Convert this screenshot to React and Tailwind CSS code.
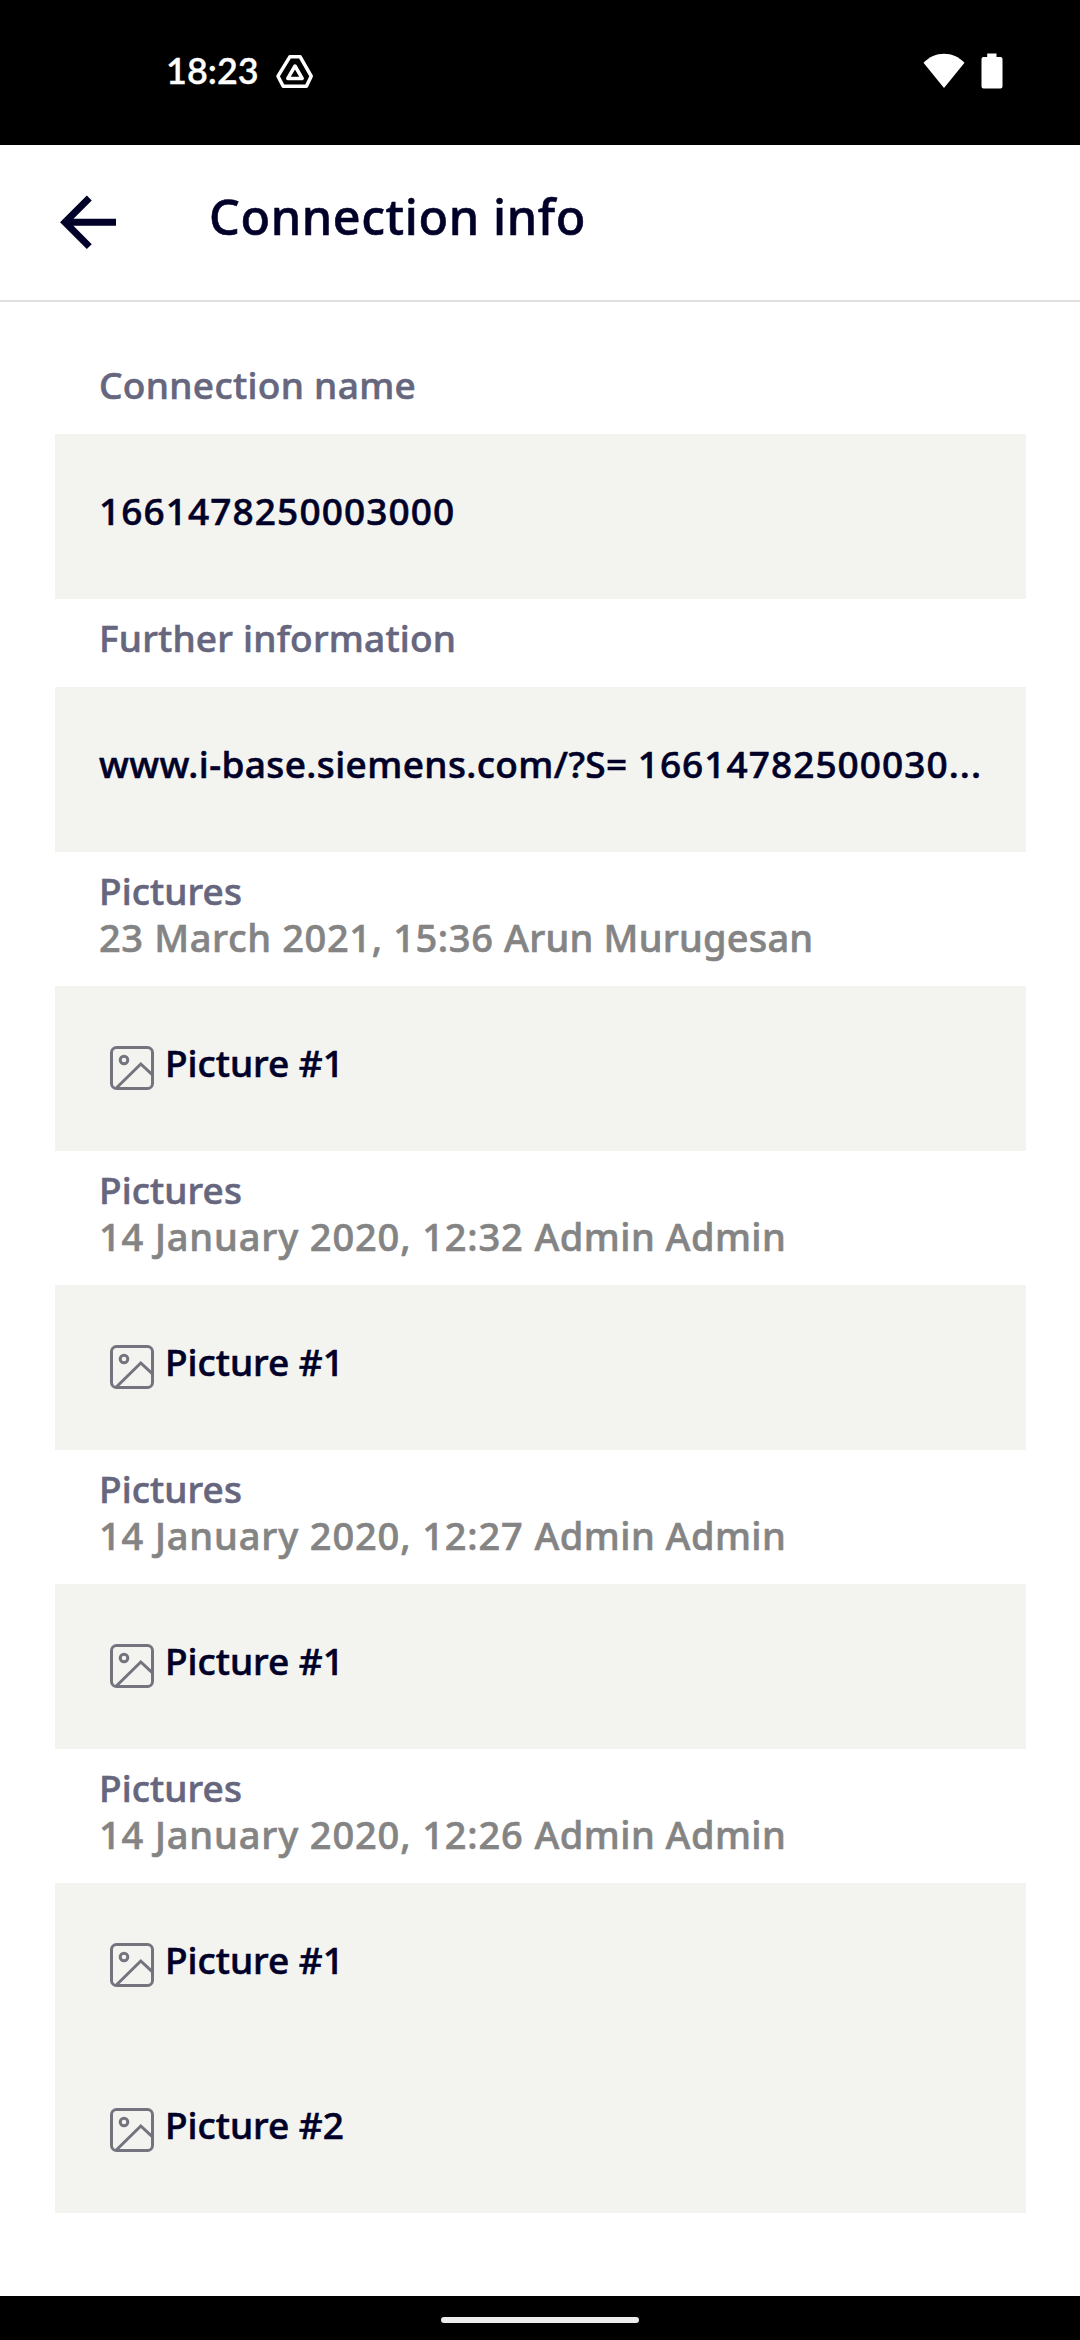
import React from "react";

const SECTIONS = [
  { date: "23 March 2021, 15:36", author: "Arun Murugesan", dateSpacing: "tracking-[0.62px]", authorSpacing: "tracking-[0.2px]", pictures: ["Picture #1"] },
  { date: "14 January 2020, 12:32", author: "Admin Admin", dateSpacing: "tracking-[0.85px]", authorSpacing: "tracking-[0.45px]", pictures: ["Picture #1"] },
  { date: "14 January 2020, 12:27", author: "Admin Admin", dateSpacing: "tracking-[0.85px]", authorSpacing: "tracking-[0.45px]", pictures: ["Picture #1"] },
  { date: "14 January 2020, 12:26", author: "Admin Admin", dateSpacing: "tracking-[0.85px]", authorSpacing: "tracking-[0.45px]", pictures: ["Picture #1", "Picture #2"] },
];

function StatusBar() {
  return (
    <div className="flex h-[145px] shrink-0 items-start bg-black pt-[52px] pl-[166px] pr-[77px] text-white">
      <span className="h-9 w-[92px] whitespace-nowrap font-['Lato',sans-serif] text-[36px] font-semibold leading-9 [-webkit-text-stroke:0.3px]">18:23</span>
      <svg className="mt-[2px] ml-[17px] h-[36px] w-[40px]" viewBox="0 0 40 36" fill="none" stroke="currentColor" strokeWidth="3.5" strokeLinejoin="round">
        <path d="M14.8 2.8H25.2L36.2 22.2L31.4 32.2H8.2L3 22.2Z" />
        <path d="M20 12L27.2 24.4H12.8Z" />
      </svg>
      <svg className="mt-[1px] ml-auto h-[36px] w-[42px]" viewBox="0 0 42 36" fill="currentColor">
        <path d="M0.5 9.8C11.5-2.4 30.5-2.4 41.5 9.8L21 35Z" />
      </svg>
      <svg className="mt-[1px] ml-[16px] h-[36px] w-[22px]" viewBox="0 0 22 36" fill="currentColor">
        <path d="M6.2 0.5H15.5V4H19.5Q21.5 4 21.5 6V33.5Q21.5 35.5 19.5 35.5H2.5Q0.5 35.5 0.5 33.5V6Q0.5 4 2.5 4H6.2Z" />
      </svg>
    </div>
  );
}

function Header() {
  return (
    <header className="flex h-[157px] shrink-0 items-start border-b-2 border-[#e0e0e0] pl-[60px]">
      <svg className="mt-[50px] h-[55px] w-[56px] shrink-0" viewBox="0 0 56 55" fill="none" stroke="currentColor" strokeWidth="7">
        <path d="M29.3 3L5 27.3L29.3 51.6M5 27.3H56" />
      </svg>
      <h1 className="mt-[41px] ml-[93px] whitespace-nowrap text-[48.5px] font-medium leading-[60px] tracking-[0.62px] [-webkit-text-stroke:0.6px]">Connection info</h1>
    </header>
  );
}

function PictureIcon() {
  return (
    <svg className="h-[44px] w-[44px] shrink-0 text-[#74747f]" viewBox="0 0 44 44" fill="none" stroke="currentColor" strokeWidth="3">
      <rect x="1.5" y="1.5" width="41" height="41" rx="5" />
      <circle cx="14" cy="14" r="3.8" />
      <path d="M6.6 41.8L30.8 18L42.2 28.6" />
    </svg>
  );
}

function Label({ children, className }) {
  return (
    <div className={`whitespace-nowrap text-[37px] font-medium leading-[46px] text-[#66667e] [-webkit-text-stroke:0.6px] ${className}`}>
      {children}
    </div>
  );
}

function ValueCard({ children }) {
  return (
    <div className="flex h-[165px] items-center bg-[#f3f3f0] pb-[11px] pl-[44px]">
      <span className="whitespace-nowrap text-[37px] font-medium leading-[46px] [-webkit-text-stroke:0.6px]">{children}</span>
    </div>
  );
}

export default function App() {
  return (
    <div className="flex h-[2340px] w-[1080px] flex-col overflow-hidden bg-white font-['Noto_Sans',sans-serif] text-[#000028]">
      <StatusBar />
      <Header />
      <main className="flex flex-1 flex-col pt-[44px] pl-[55px] pr-[54px]">
        <div className="h-[88px] pt-4 pl-[44px]">
          <Label className="tracking-[0.33px]">Connection name</Label>
        </div>
        <ValueCard>
          <span className="tracking-[1.1px]">1661478250003000</span>
        </ValueCard>
        <div className="h-[88px] pt-4 pl-[44px]">
          <Label className="tracking-[0.22px]">Further information</Label>
        </div>
        <ValueCard>
          <span className="tracking-[0.4px]">www.i-base.siemens.com/?S= </span>
          <span className="tracking-[1.05px]">16614782500030...</span>
        </ValueCard>
        {SECTIONS.map(({ date, author, dateSpacing, authorSpacing, pictures }) => (
          <section key={date}>
            <div className="h-[134px] pt-4 pl-[44px]">
              <Label className="tracking-[0.1px]">Pictures</Label>
              <div className="whitespace-nowrap text-[38px] font-medium leading-[46px] text-[#848484] [-webkit-text-stroke:0.6px]">
                <span className={dateSpacing}>{date} </span>
                <span className={authorSpacing}>{author}</span>
              </div>
            </div>
            <div className="bg-[#f3f3f0]">
              {pictures.map((name) => (
                <div key={name} className="flex h-[165px] items-center gap-[11px] pb-[1px] pl-[55px]">
                  <PictureIcon />
                  <span className="pb-[10px] text-[37px] font-medium leading-[46px] [-webkit-text-stroke:0.6px]">{name}</span>
                </div>
              ))}
            </div>
          </section>
        ))}
      </main>
      <footer className="flex h-[44px] shrink-0 justify-center bg-black pt-[21px]">
        <div className="h-[6px] w-[198px] rounded-full bg-[#ececec]" />
      </footer>
    </div>
  );
}
